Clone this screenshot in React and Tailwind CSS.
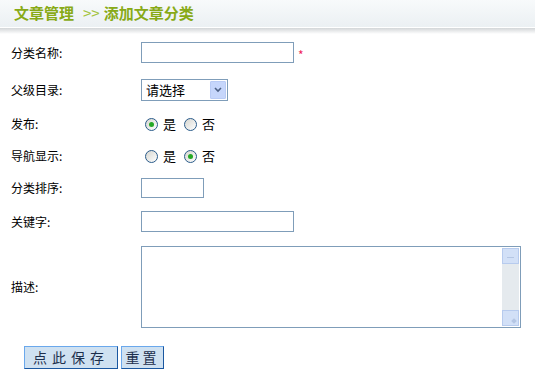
import React from 'react';

const cjk = { fontFamily: '"Noto Sans CJK SC", "Liberation Sans", sans-serif' };

function Radio({ checked }) {
  return (
    <span className="flex h-[13px] w-[13px] items-center justify-center rounded-full border border-[#2a5b8a] bg-gradient-to-br from-[#d6d6d0] to-white">
      {checked && <span className="h-[5px] w-[5px] rounded-full bg-[#25a825]" />}
    </span>
  );
}

function Row({ label, h, mt, children }) {
  return (
    <div className={`flex items-center ${h} ${mt}`}>
      <div className="w-[141px] shrink-0 pl-[11px] text-[12px] text-black">{label}:</div>
      <div className="flex items-center">{children}</div>
    </div>
  );
}

function Choice({ yes }) {
  return (
    <div className="flex items-center pl-[4px] text-[13px] text-black">
      <Radio checked={yes} />
      <span className="ml-[5px]">是</span>
      <span className="ml-[8px]"><Radio checked={!yes} /></span>
      <span className="ml-[5px]">否</span>
    </div>
  );
}

export default function App() {
  return (
    <div className="h-[371px] w-[535px] bg-white" style={cjk}>
      <div className="flex h-[27px] items-center bg-gradient-to-b from-[#f8fafb] to-[#ebf0f3] pl-[14px] text-[15px] font-bold text-[#88aa17]">
        <span>文章管理</span>
        <span className="ml-[9px] font-normal text-[#a3c440]">&gt;&gt;</span>
        <span className="ml-[4px]">添加文章分类</span>
      </div>
      <div className="h-px bg-white" />
      <div className="h-[6px] bg-gradient-to-b from-[#d3d6d8] to-white" />

      <div className="flex flex-col">
        <Row label="分类名称" h="h-[21px]" mt="mt-[8px]">
          <input className="h-[21px] w-[153px] border border-[#7f9db9] outline-none" />
          <span className="ml-[4px] mt-[4px] text-[12px] leading-none text-[#ef1f5a]">*</span>
        </Row>

        <Row label="父级目录" h="h-[22px]" mt="mt-[16px]">
          <div className="flex h-[22px] w-[87px] items-center border border-[#7f9db9] bg-white">
            <span className="flex-1 pl-[4px] text-[13px] text-black">请选择</span>
            <span className="mr-px flex h-[18px] w-[16px] items-center justify-center rounded-[1px] border border-[#b9cbf5] bg-[#c6d6fb]">
              <svg width="8" height="6" viewBox="0 0 8 6">
                <path d="M1 1 L4 4 L7 1" stroke="#4d6185" strokeWidth="1.6" fill="none" />
              </svg>
            </span>
          </div>
        </Row>

        <Row label="发布" h="h-[20px]" mt="mt-[13px]">
          <Choice yes />
        </Row>

        <Row label="导航显示" h="h-[20px]" mt="mt-[12px]">
          <Choice yes={false} />
        </Row>

        <Row label="分类排序" h="h-[20px]" mt="mt-[12px]">
          <input className="h-[20px] w-[63px] border border-[#7f9db9] outline-none" />
        </Row>

        <Row label="关键字" h="h-[21px]" mt="mt-[13px]">
          <input className="h-[21px] w-[153px] border border-[#7f9db9] outline-none" />
        </Row>

        <Row label="描述" h="h-[82px]" mt="mt-[14px]">
          <div className="flex h-[82px] w-[380px] border border-[#7f9db9] bg-white">
            <textarea className="flex-1 resize-none outline-none" />
            <div className="my-px mr-px flex w-[17px] flex-col bg-[#e5eaee]">
              <div className="flex h-[16px] items-center justify-center border border-[#b7cbee] bg-[#d2e0f7]">
                <span className="mt-[3px] h-px w-[7px] bg-[#b4c6e4]" />
              </div>
              <div className="flex-1" />
              <div className="flex h-[16px] items-end justify-end border border-[#b7cbee] bg-[#d2e0f7] p-[2px]">
                <span className="h-[4px] w-[4px] rotate-45 bg-[#b4c6e4]" />
              </div>
            </div>
          </div>
        </Row>

        <div className="mt-[18px] flex pl-[24px]">
          <button className="h-[23px] w-[94px] border border-t-[#6aa8ec] border-l-[#6aa8ec] border-b-[#1a57a0] border-r-[#1a57a0] bg-[#cfe1f1] text-[14px] tracking-[5px] text-[#1d2f4d]">
            点此保存
          </button>
          <button className="ml-[3px] h-[23px] w-[43px] border border-t-[#6aa8ec] border-l-[#6aa8ec] border-b-[#1a57a0] border-r-[#1a57a0] bg-[#cfe1f1] text-[14px] tracking-[3px] text-[#1d2f4d]">
            重置
          </button>
        </div>
      </div>
    </div>
  );
}
